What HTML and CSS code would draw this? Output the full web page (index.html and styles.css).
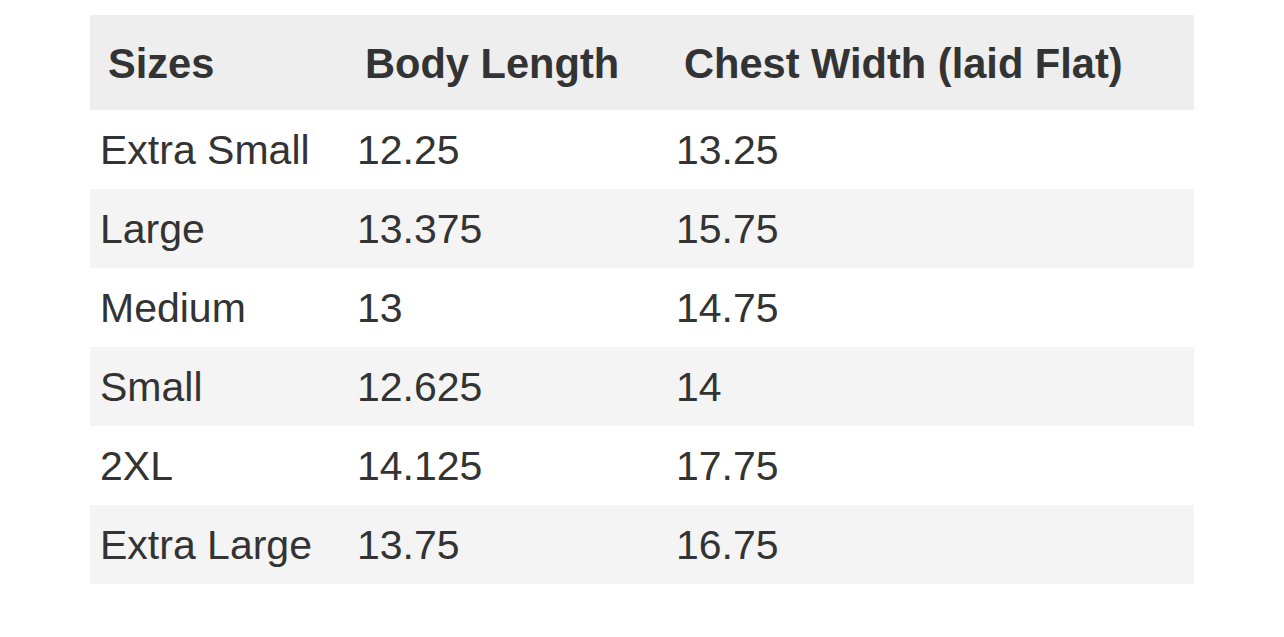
FILE: index.html
```html
<!DOCTYPE html>
<html>
<head>
<meta charset="utf-8">
<link rel="stylesheet" href="styles.css">
</head>
<body>
<div class="page">
  <table class="sizes">
    <colgroup>
      <col class="c1"><col class="c2"><col class="c3">
    </colgroup>
    <thead>
      <tr><th>Sizes</th><th>Body Length</th><th>Chest Width (laid Flat)</th></tr>
    </thead>
    <tbody>
      <tr><td>Extra Small</td><td>12.25</td><td>13.25</td></tr>
      <tr><td>Large</td><td>13.375</td><td>15.75</td></tr>
      <tr><td>Medium</td><td>13</td><td>14.75</td></tr>
      <tr><td>Small</td><td>12.625</td><td>14</td></tr>
      <tr><td>2XL</td><td>14.125</td><td>17.75</td></tr>
      <tr><td>Extra Large</td><td>13.75</td><td>16.75</td></tr>
    </tbody>
  </table>
</div>
</body>
</html>
```
FILE: styles.css
```css
html, body {
  margin: 0;
  padding: 0;
  background: #ffffff;
}
.page {
  padding: 15px 90px;
}
.sizes {
  width: 1104px;
  border-collapse: collapse;
  table-layout: fixed;
  font-family: "Liberation Sans", Arial, sans-serif;
  font-size: 41px;
  color: #333333;
}
.c1 { width: 257px; }
.c2 { width: 319px; }
.c3 { width: 528px; }
.sizes th {
  height: 93px;
  padding: 2px 0 0 18px;
  text-align: left;
  font-weight: bold;
  font-size: 41.6px;
  background: #eeeeee;
  vertical-align: middle;
  line-height: 1;
}
.sizes td {
  height: 77px;
  padding: 2px 0 0 10px;
  vertical-align: middle;
  line-height: 1;
  white-space: nowrap;
}
.sizes tbody tr:nth-child(even) td {
  background: #f4f4f4;
}
```
